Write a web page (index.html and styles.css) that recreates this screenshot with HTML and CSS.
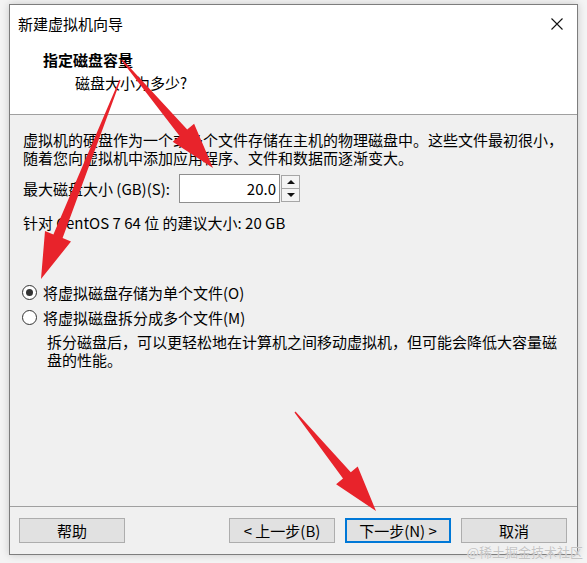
FILE: index.html
```html
<!DOCTYPE html>
<html lang="zh-CN">
<head>
<meta charset="utf-8">
<title>新建虚拟机向导</title>
<link rel="stylesheet" href="styles.css">
</head>
<body>
<div class="window">
  <div class="top">
    <div class="titlebar">
      <span class="title">新建虚拟机向导</span>
      <svg class="close" width="12" height="12" viewBox="0 0 12 12"><path d="M0.5 0.5 L11.5 11.5 M11.5 0.5 L0.5 11.5" stroke="#111" stroke-width="1.1" fill="none"/></svg>
    </div>
    <div class="header">
      <div class="h-title">指定磁盘容量</div>
      <div class="h-sub">磁盘大小为多少?</div>
    </div>
  </div>
  <div class="body">
    <p class="para">虚拟机的硬盘作为一个或多个文件存储在主机的物理磁盘中。这些文件最初很小，<br>随着您向虚拟机中添加应用程序、文件和数据而逐渐变大。</p>
    <div class="size-row">
      <span class="size-label">最大磁盘大小 (GB)(S):</span>
      <div class="spin">
        <div class="spin-input">20.0</div>
        <div class="spin-btns">
          <div class="spin-btn"><span class="tri-up"></span></div>
          <div class="spin-btn"><span class="tri-down"></span></div>
        </div>
      </div>
    </div>
    <p class="hint">针对 CentOS 7 64 位 的建议大小: 20 GB</p>
    <div class="radios">
      <div class="radio-row"><span class="radio checked"></span><span>将虚拟磁盘存储为单个文件(O)</span></div>
      <div class="radio-row"><span class="radio"></span><span>将虚拟磁盘拆分成多个文件(M)</span></div>
    </div>
    <p class="desc">拆分磁盘后，可以更轻松地在计算机之间移动虚拟机，但可能会降低大容量磁<br>盘的性能。</p>
  </div>
  <div class="footer">
    <button class="btn">帮助</button>
    <div class="spacer"></div>
    <button class="btn">&lt; 上一步(B)</button>
    <button class="btn default">下一步(N) &gt;</button>
    <button class="btn">取消</button>
  </div>
</div>
<div class="watermark">@稀土掘金技术社区</div>
<svg class="arrows" width="587" height="563" viewBox="0 0 587 563">
  <polygon fill="#e8232b" points="121.5,60.4 179.6,136.0 172.7,141.8 213,168 194.1,123.8 187.2,129.6 122.5,59.6"/>
  <polygon fill="#e8232b" points="119.4,79.8 53.4,234.5 45.0,231.1 41,279 71.0,241.5 62.6,238.1 120.6,80.2"/>
  <polygon fill="#e8232b" points="294.5,412.4 343.0,478.6 336.1,484.3 376,511 357.7,466.5 350.8,472.2 295.5,411.6"/>
</svg>
</body>
</html>
```
FILE: styles.css
```css
html, body {
  margin: 0;
  padding: 0;
}
body {
  width: 587px;
  height: 563px;
  background: #f4f4f4;
  font-family: "Noto Sans CJK SC", "Noto Sans", sans-serif;
  font-size: 15px;
  color: #000;
  position: relative;
  overflow: hidden;
}
.window {
  position: relative;
  margin: 4px 0 0 9px;
  width: 567px;
  height: 549px;
  border: 1px solid #7d7d7d;
  background: #f0f0f0;
  display: flex;
  flex-direction: column;
  box-shadow: 0 0 8px rgba(0, 0, 0, 0.18);
}
.top {
  height: 109px;
  background: #fff;
  border-bottom: 1px solid #a0a0a0;
  flex: none;
}
.titlebar {
  height: 38px;
  display: flex;
  align-items: center;
  padding: 0 14px 0 8px;
}
.title {
  flex: 1;
  line-height: 20px;
}
.close {
  display: block;
}
.header {
  padding: 7px 0 0 33px;
}
.h-title {
  font-weight: bold;
  line-height: 20px;
}
.h-sub {
  margin: 3px 0 0 32px;
  line-height: 20px;
}
.body {
  flex: 1;
  padding: 0 13px;
}
.para {
  margin: 16px 0 0;
  line-height: 18px;
  white-space: nowrap;
}
.size-row {
  margin-top: 7px;
  height: 29px;
  display: flex;
  align-items: center;
}
.size-label {
  width: 156px;
  line-height: 18px;
  flex: none;
}
.spin {
  display: flex;
  height: 29px;
}
.spin-input {
  width: 96px;
  height: 27px;
  border: 1px solid #8f8f8f;
  background: #fff;
  text-align: right;
  line-height: 27px;
  padding-right: 3px;
  box-sizing: content-box;
}
.spin-btns {
  margin: 1px 0 0 1px;
  display: flex;
  flex-direction: column;
  width: 19px;
  height: 27px;
}
.spin-btn {
  flex: 1;
  border: 1px solid #a6a6a6;
  background: #f4f4f4;
  display: flex;
  align-items: center;
  justify-content: center;
}
.spin-btn + .spin-btn {
  border-top: none;
}
.tri-up {
  width: 0;
  height: 0;
  border-left: 4px solid transparent;
  border-right: 4px solid transparent;
  border-bottom: 4px solid #111;
}
.tri-down {
  width: 0;
  height: 0;
  border-left: 4px solid transparent;
  border-right: 4px solid transparent;
  border-top: 4px solid #111;
}
.hint {
  margin: 11px 0 0;
  line-height: 18px;
}
.radios {
  margin-top: 48px;
}
.radio-row {
  height: 25px;
  display: flex;
  align-items: center;
  gap: 6px;
  line-height: 18px;
}
.radio {
  width: 15px;
  height: 15px;
  border: 1px solid #333;
  border-radius: 50%;
  background: #fff;
  box-sizing: border-box;
  position: relative;
  flex: none;
  margin-left: -1px;
}
.radio.checked::after {
  content: "";
  position: absolute;
  left: 3px;
  top: 3px;
  width: 7px;
  height: 7px;
  border-radius: 50%;
  background: #333;
}
.desc {
  margin: 3px 0 0 24px;
  line-height: 18px;
  white-space: nowrap;
}
.footer {
  flex: none;
  border-top: 1px solid #a0a0a0;
  display: flex;
  align-items: flex-start;
  padding: 11px 10px 0 9px;
  box-sizing: border-box;
  height: 48px;
  gap: 10px;
}
.spacer {
  flex: 1;
}
.btn {
  width: 106px;
  height: 25px;
  margin: 0;
  padding: 0;
  border: 1px solid #adadad;
  background: #e1e1e1;
  font-family: "Noto Sans CJK SC", "Noto Sans", sans-serif;
  font-size: 15px;
  color: #000;
  line-height: 22px;
}
.btn.default {
  border: 2px solid #0078d7;
  line-height: 20px;
}
.watermark {
  position: absolute;
  right: 4px;
  top: 543px;
  font-size: 13px;
  line-height: 18px;
  color: #c4c4c4;
  text-shadow: 0 0 1px #fff;
}
.arrows {
  position: absolute;
  left: 0;
  top: 0;
  pointer-events: none;
}
```
